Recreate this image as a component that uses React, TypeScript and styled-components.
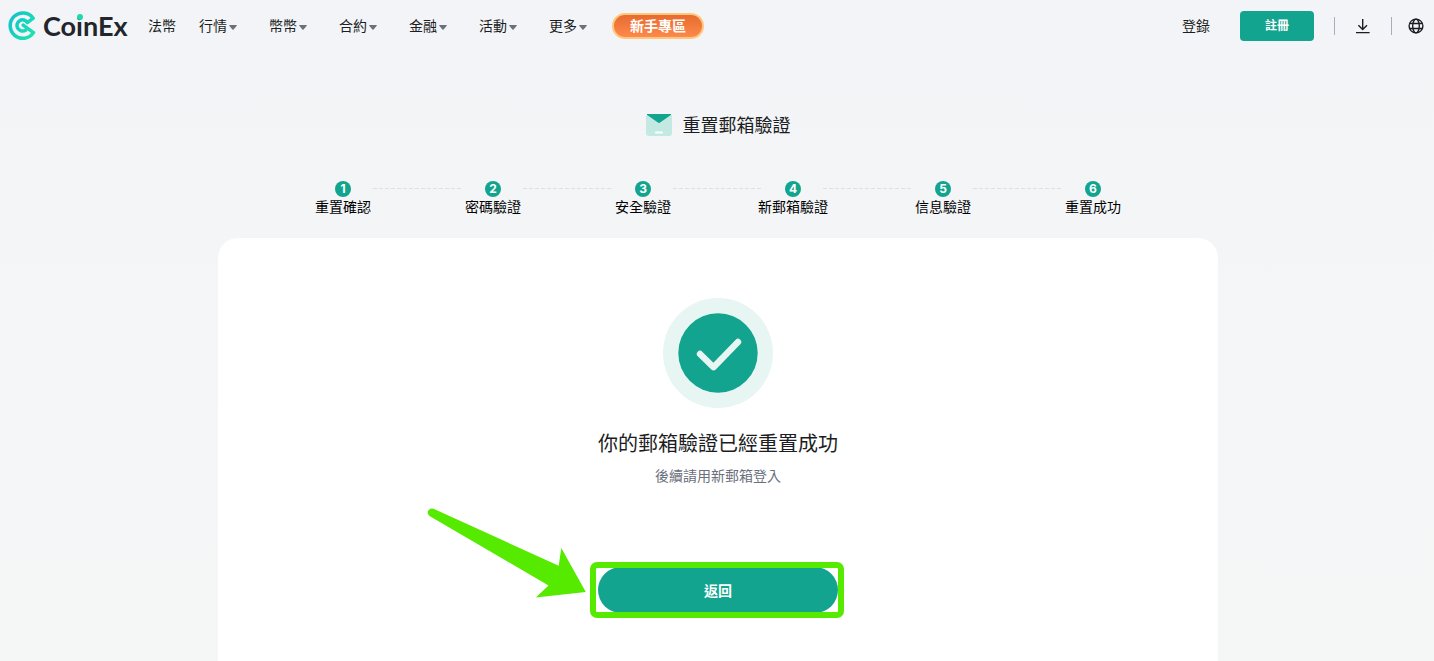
import React from "react";
import styled, { createGlobalStyle } from "styled-components";

const green = "#12a48e";

const GlobalStyle = createGlobalStyle`
  * { box-sizing: border-box; }
  html, body, #root { height: 100%; }
  body {
    margin: 0;
    overflow: hidden;
    color: #1b1d22;
    font-family: "Noto Sans CJK TC", "Noto Sans", sans-serif;
    font-size: 14px;
    line-height: 20px;
  }
  button { font-family: inherit; cursor: pointer; }
  a { color: inherit; text-decoration: none; }
`;

const Page = styled.div`
  min-height: 100%;
  display: flex;
  flex-direction: column;
  background: linear-gradient(180deg, #f2f4f7 0%, #f5f7f7 100%);
`;

const Header = styled.header`
  display: flex;
  align-items: center;
  justify-content: space-between;
  height: 52px;
  padding: 0 10px 0 8px;
`;

const HeaderGroup = styled.div`
  display: flex;
  align-items: center;
`;

const LogoLink = styled.a`
  display: flex;
  align-items: center;
  gap: 6px;
  width: 120px;
  margin-right: 20px;
`;

const Wordmark = styled.span`
  font-family: Lato, sans-serif;
  font-size: 27px;
  line-height: 32px;
  font-weight: 700;
  color: #22252b;
`;

const DottedI = styled.span`
  position: relative;
  &::after {
    content: "";
    position: absolute;
    left: 50%;
    top: 5px;
    width: 6px;
    height: 6px;
    margin-left: -3px;
    border-radius: 50%;
    background: #1fd8b4;
  }
`;

const TextLink = styled.a`
  padding-bottom: 2px;
`;

const Nav = styled.nav`
  display: flex;
  align-items: center;
  gap: 32px;
  margin-left: 23px;
`;

const NavButton = styled.button`
  display: flex;
  align-items: center;
  gap: 2px;
  width: 38px;
  padding: 0 0 2px;
  border: 0;
  background: none;
  color: inherit;
  font-size: 14px;
  line-height: 20px;
  white-space: nowrap;
`;

const Caret = styled.svg`
  flex: none;
  margin-top: 4px;
`;

const RookieLink = styled.a`
  display: flex;
  align-items: center;
  justify-content: center;
  width: 92px;
  height: 26px;
  margin-left: 25px;
  padding-bottom: 2px;
  border: 2px solid #ffc77d;
  border-radius: 13px;
  background: linear-gradient(180deg, #e5682b, #ff8c4e);
  background-origin: border-box;
  color: #fff;
  font-weight: 700;
`;

const SignUp = styled.button`
  width: 74px;
  height: 30px;
  margin: 0 20px 0 30px;
  padding: 0 0 2px;
  border: 0;
  border-radius: 4px;
  background: ${green};
  color: #fff;
  font-size: 12px;
  font-weight: 700;
  line-height: 20px;
`;

const Divider = styled.span`
  width: 1px;
  height: 18px;
  background: #a9adb6;
`;

const IconButton = styled.button<{ $left: number; $right: number }>`
  display: flex;
  padding: 0;
  margin: 0 ${(p) => p.$right}px 0 ${(p) => p.$left}px;
  border: 0;
  background: none;
  color: #1b1d22;
`;

const Main = styled.main`
  flex: 1;
  display: flex;
  flex-direction: column;
  align-items: center;
  padding: 60px 8px 0 10px;
`;

const TitleRow = styled.div`
  display: flex;
  align-items: center;
  gap: 11px;
`;

const Title = styled.h1`
  margin: 0;
  padding-bottom: 2px;
  font-size: 18px;
  font-weight: 400;
  line-height: 24px;
`;

const Steps = styled.ol`
  display: flex;
  margin: 43px 0 0;
  padding: 0;
  list-style: none;
`;

const Step = styled.li`
  display: flex;
`;

const StepNode = styled.div`
  display: flex;
  flex-direction: column;
  align-items: center;
  width: 60px;
  color: #000;
  line-height: 18px;
  white-space: nowrap;
`;

const StepNumber = styled.span`
  width: 16px;
  height: 16px;
  border-radius: 50%;
  background: ${green};
  color: #fff;
  font-family: Inter, sans-serif;
  font-size: 12px;
  font-weight: 700;
  line-height: 16px;
  text-align: center;
`;

const Connector = styled.svg`
  width: 90px;
  height: 1px;
  margin-top: 7px;
`;

const Card = styled.section`
  flex: 1;
  display: flex;
  flex-direction: column;
  align-items: center;
  width: 100%;
  max-width: 1000px;
  margin-top: 23px;
  padding: 60px 20px 46px;
  border-radius: 20px 20px 0 0;
  background: #fff;
`;

const Message = styled.h2`
  margin: 20px 0 0;
  font-size: 20px;
  font-weight: 400;
  line-height: 30px;
`;

const Hint = styled.p`
  margin: 7px 0 0;
  color: #6b707c;
`;

const Callout = styled.div`
  position: relative;
  margin-top: 82px;
`;

const BackButton = styled.button`
  display: block;
  width: 240px;
  height: 46px;
  padding: 0;
  border: 0;
  border-radius: 23px;
  background: ${green};
  color: #fff;
  font-size: 14px;
  font-weight: 700;
  line-height: 20px;
`;

const Frame = styled.div`
  position: absolute;
  inset: -5px -6px -5px -8px;
  border: 6px solid #55ea00;
  border-radius: 7px;
  pointer-events: none;
`;

const Arrow = styled.svg`
  position: absolute;
  left: -171px;
  top: -60px;
  pointer-events: none;
`;

const menus = ["行情", "幣幣", "合約", "金融", "活動", "更多"];
const steps = ["重置確認", "密碼驗證", "安全驗證", "新郵箱驗證", "信息驗證", "重置成功"];

function LogoMark() {
  return (
    <svg width="29" height="30" viewBox="0 0 29 30" fill="none" aria-hidden="true">
      <defs>
        <linearGradient id="mark" x1="0" y1="8" x2="26" y2="24" gradientUnits="userSpaceOnUse">
          <stop offset="0" stopColor="#12c2cf" />
          <stop offset="1" stopColor="#20e2ac" />
        </linearGradient>
      </defs>
      <path
        d="M17.6 19.2A5.6 5.6 0 1 1 19.4 11.6L25.200 7.200A12.700 12.700 0 1 0 25.500 21.600L15.200 14.200"
        stroke="url(#mark)"
        strokeWidth="3.5"
        strokeLinejoin="round"
        strokeLinecap="round"
      />
    </svg>
  );
}

export default function App() {
  return (
    <Page>
      <GlobalStyle />
      <Header>
        <HeaderGroup>
          <LogoLink href="#" aria-label="CoinEx">
            <LogoMark />
            <Wordmark>
              Co<DottedI>i</DottedI>nEx
            </Wordmark>
          </LogoLink>
          <TextLink href="#">法幣</TextLink>
          <Nav>
            {menus.map((label) => (
              <NavButton key={label}>
                {label}
                <Caret width="8" height="5" viewBox="0 0 8 5" aria-hidden="true">
                  <path d="M.7 0h6.6q.9 0 .4.7L4.6 4.4q-.6.6-1.2 0L.3.7Q-.2 0 .7 0Z" fill="#6b707c" />
                </Caret>
              </NavButton>
            ))}
          </Nav>
          <RookieLink href="#">新手專區</RookieLink>
        </HeaderGroup>
        <HeaderGroup>
          <TextLink href="#">登錄</TextLink>
          <SignUp>註冊</SignUp>
          <Divider />
          <IconButton $left={20} $right={20} aria-label="下載">
            <svg width="16" height="16" viewBox="0 0 16 16" fill="none" stroke="currentColor" strokeWidth="1.4">
              <path d="M7.7 1v10.4M3.4 7.2l4.3 4.3L12 7.2M1 14.6h13.6" />
            </svg>
          </IconButton>
          <Divider />
          <IconButton $left={16} $right={0} aria-label="語言">
            <svg width="16" height="16" viewBox="0 0 16 16" fill="none" stroke="currentColor" strokeWidth="1.4">
              <circle cx="8" cy="8" r="6.9" />
              <ellipse cx="8" cy="8" rx="3.3" ry="6.9" />
              <path d="M1.7 5.5h12.6M1.7 10.5h12.6" />
            </svg>
          </IconButton>
        </HeaderGroup>
      </Header>
      <Main>
        <TitleRow>
          <svg width="26" height="22" viewBox="0 0 26 22" aria-hidden="true">
            <rect width="26" height="22" rx="3" fill="#c4e9e3" />
            <path d="M1.200 0h23.600q.7.400 0 1L14.100 8.600q-1.100.7-2.200 0L1.200 1q-.7-.6 0-1Z" fill={green} />
            <rect x="9" y="17.500" width="8" height="2" rx="1" fill="#fff" />
          </svg>
          <Title>重置郵箱驗證</Title>
        </TitleRow>
        <Steps>
          {steps.map((label, i) => (
            <Step key={label}>
              <StepNode>
                <StepNumber>{i + 1}</StepNumber>
                <span>{label}</span>
              </StepNode>
              {i < steps.length - 1 && (
                <Connector aria-hidden="true">
                  <line x1="0" y1="0.5" x2="90" y2="0.5" stroke="#dcdfe3" strokeDasharray="4 2" />
                </Connector>
              )}
            </Step>
          ))}
        </Steps>
        <Card>
          <svg width="110" height="110" viewBox="0 0 110 110" fill="none" aria-hidden="true">
            <circle cx="55" cy="55" r="55" fill="#e7f5f3" />
            <circle cx="55" cy="55" r="39.7" fill={green} />
            <path d="M37 56 50.5 69.2 75 44" stroke="#e7f5f3" strokeWidth="6.4" strokeLinecap="round" strokeLinejoin="round" />
          </svg>
          <Message>你的郵箱驗證已經重置成功</Message>
          <Hint>後續請用新郵箱登入</Hint>
          <Callout>
            <BackButton>返回</BackButton>
            <Frame />
            <Arrow width="160" height="92" viewBox="427 507 160 92" aria-hidden="true">
              <path
                d="M433.5 508.8 558.7 565.7 561.3 548 585.8 592 535.8 597.5 548.5 585.5 429.5 516Q426.4 513 428.5 510.3 430.5 508 433.5 508.8Z"
                fill="#55ea00"
              />
            </Arrow>
          </Callout>
        </Card>
      </Main>
    </Page>
  );
}
